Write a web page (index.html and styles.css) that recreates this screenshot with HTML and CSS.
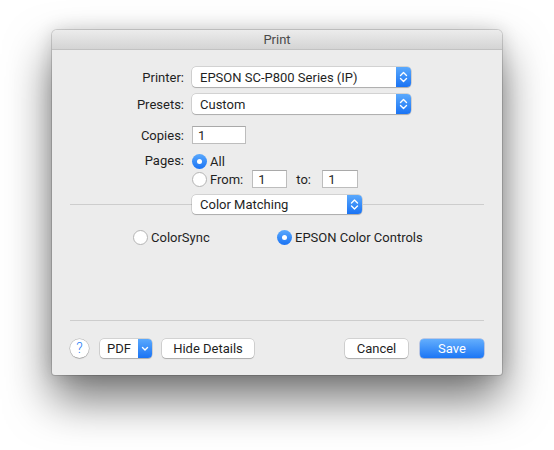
FILE: index.html
```html
<!DOCTYPE html>
<html lang="en">
<head>
    <meta charset="UTF-8">
    <meta name="viewport" content="width=device-width, initial-scale=1.0">
    <title>Print</title>
    <link rel="stylesheet" href="styles.css">
</head>
<body>
    <div class="window">
        <div class="titlebar">Print</div>

        <div class="form">
            <div class="row row-printer">
                <span class="label">Printer:</span>
                <div class="popup popup-wide">
                    <span class="popup-text">EPSON SC-P800 Series (IP)</span>
                    <span class="stepper">
                        <svg width="15" height="20" viewBox="0 0 15 20"><path d="M4.5 8.5 L7.5 5.5 L10.5 8.5 M4.5 11.5 L7.5 14.5 L10.5 11.5" fill="none" stroke="#fff" stroke-width="1.4" stroke-linecap="round" stroke-linejoin="round"/></svg>
                    </span>
                </div>
            </div>

            <div class="row row-presets">
                <span class="label">Presets:</span>
                <div class="popup popup-wide">
                    <span class="popup-text">Custom</span>
                    <span class="stepper">
                        <svg width="15" height="20" viewBox="0 0 15 20"><path d="M4.5 8.5 L7.5 5.5 L10.5 8.5 M4.5 11.5 L7.5 14.5 L10.5 11.5" fill="none" stroke="#fff" stroke-width="1.4" stroke-linecap="round" stroke-linejoin="round"/></svg>
                    </span>
                </div>
            </div>

            <div class="row row-copies">
                <span class="label">Copies:</span>
                <div class="field field-copies">1</div>
            </div>

            <div class="row row-pages">
                <span class="label label-pages">Pages:</span>
                <div class="pages">
                    <div class="radio-line">
                        <span class="radio checked"></span>
                        <span class="radio-text">All</span>
                    </div>
                    <div class="radio-line radio-from">
                        <span class="radio"></span>
                        <span class="radio-text">From:</span>
                        <div class="field field-from">1</div>
                        <span class="to-text">to:</span>
                        <div class="field field-to">1</div>
                    </div>
                </div>
            </div>
        </div>

        <div class="section">
            <span class="rule"></span>
            <div class="popup popup-section">
                <span class="popup-text">Color Matching</span>
                <span class="stepper">
                    <svg width="15" height="19" viewBox="0 0 15 19"><path d="M4.5 8 L7.5 5 L10.5 8 M4.5 11 L7.5 14 L10.5 11" fill="none" stroke="#fff" stroke-width="1.4" stroke-linecap="round" stroke-linejoin="round"/></svg>
                </span>
            </div>
            <span class="rule"></span>
        </div>

        <div class="matching">
            <div class="radio-line match-item">
                <span class="radio"></span>
                <span class="radio-text">ColorSync</span>
            </div>
            <div class="radio-line">
                <span class="radio checked"></span>
                <span class="radio-text">EPSON Color Controls</span>
            </div>
        </div>

        <div class="footer-rule"></div>

        <div class="footer">
            <span class="help">?</span>
            <div class="pdf">
                <span class="pdf-text">PDF</span>
                <span class="pdf-arrow">
                    <svg width="14" height="19" viewBox="0 0 14 19"><path d="M4.5 8.5 L7 11 L9.5 8.5" fill="none" stroke="#fff" stroke-width="1.4" stroke-linecap="round" stroke-linejoin="round"/></svg>
                </span>
            </div>
            <button class="btn btn-details">Hide Details</button>
            <span class="spacer"></span>
            <button class="btn btn-cancel">Cancel</button>
            <button class="btn btn-save">Save</button>
        </div>
    </div>
</body>
</html>
```

FILE: styles.css
```css
html {
    background-color: #ffffff;
}

body {
    margin: 0;
    min-height: 450px;
    padding-top: 30px;
    box-sizing: border-box;
    font-family: "Roboto", "Inter", sans-serif;
    font-size: 13px;
    color: #1f1f1f;
}

.window {
    width: 450px;
    margin-left: 52px;
    background-color: #ececec;
    border-radius: 5px 5px 3px 3px;
    box-shadow: 0 24px 46px rgba(0, 0, 0, 0.55), 0 0 18px rgba(0, 0, 0, 0.14), 0 0 0 1px rgba(0, 0, 0, 0.14);
    overflow: hidden;
}

.titlebar {
    height: 19px;
    line-height: 20px;
    text-align: center;
    color: #4a4a4a;
    background: linear-gradient(#ececec, #d4d4d4);
    border-bottom: 1px solid #c2c2c2;
}

.form {
    padding-top: 17px;
}

.row {
    display: flex;
    align-items: center;
}

.label {
    width: 132px;
    margin-right: 8px;
    text-align: right;
}

.row-printer {
    height: 20px;
    margin-bottom: 7px;
}

.row-presets {
    height: 20px;
    margin-bottom: 12px;
}

.row-copies {
    height: 18px;
    margin-bottom: 9px;
}

.row-pages {
    align-items: flex-start;
}

.label-pages {
    line-height: 16px;
}

.popup {
    display: flex;
    align-items: stretch;
    box-sizing: border-box;
    background-color: #ffffff;
    border-radius: 4px;
    box-shadow: 0 0 0 0.5px rgba(0, 0, 0, 0.22), 0 1px 1px rgba(0, 0, 0, 0.18);
}

.popup-wide {
    width: 219px;
    height: 20px;
}

.popup-text {
    flex: 1;
    padding-left: 8px;
    display: flex;
    align-items: center;
}

.stepper {
    width: 15px;
    display: flex;
    align-items: center;
    justify-content: center;
    background: linear-gradient(#5aa9fd, #1a73f4);
    border-radius: 0 4px 4px 0;
}

.field {
    box-sizing: border-box;
    height: 18px;
    line-height: 17px;
    padding-left: 5px;
    background-color: #ffffff;
    border: 1px solid #bdbdbd;
    border-top-color: #a9a9a9;
}

.field-copies {
    width: 54px;
}

.pages {
    display: flex;
    flex-direction: column;
}

.radio-line {
    display: flex;
    align-items: center;
    height: 16px;
}

.radio-from {
    height: 18px;
    margin-top: 1px;
}

.radio {
    box-sizing: border-box;
    width: 15px;
    height: 15px;
    border-radius: 50%;
    background-color: #ffffff;
    border: 1px solid #b4b4b4;
    margin-right: 3px;
    display: flex;
    align-items: center;
    justify-content: center;
}

.radio.checked {
    border: none;
    background: linear-gradient(#5aa9fd, #1a73f4);
}

.radio.checked::after {
    content: "";
    width: 5px;
    height: 5px;
    border-radius: 50%;
    background-color: #ffffff;
}

.field-from {
    width: 35px;
    margin-left: 9px;
}

.to-text {
    margin-left: 9px;
    width: 26px;
}

.field-to {
    width: 36px;
}

.section {
    display: flex;
    align-items: center;
    padding: 0 18px;
    margin-top: 7px;
}

.rule {
    flex: 1;
    height: 1px;
    background-color: #cdcdcd;
}

.popup-section {
    width: 170px;
    height: 19px;
}

.matching {
    display: flex;
    padding-left: 81px;
    margin-top: 15px;
}

.match-item {
    width: 144px;
}

.footer-rule {
    height: 1px;
    margin: 75px 18px 0;
    background-color: #cdcdcd;
}

.footer {
    display: flex;
    align-items: center;
    padding: 18px 18px 17px;
}

.help {
    box-sizing: border-box;
    width: 19px;
    height: 19px;
    border-radius: 50%;
    background-color: #ffffff;
    box-shadow: 0 0 0 0.5px rgba(0, 0, 0, 0.25), 0 1px 1px rgba(0, 0, 0, 0.15);
    color: #2a7ef5;
    font-size: 14px;
    font-weight: 300;
    line-height: 19px;
    text-align: center;
    margin-right: 11px;
}

.pdf {
    display: flex;
    width: 52px;
    height: 19px;
    border-radius: 4px;
    background-color: #ffffff;
    box-shadow: 0 0 0 0.5px rgba(0, 0, 0, 0.22), 0 1px 1px rgba(0, 0, 0, 0.18);
    overflow: hidden;
}

.pdf-text {
    flex: 1;
    text-align: center;
    line-height: 19px;
}

.pdf-arrow {
    width: 14px;
    display: flex;
    align-items: center;
    justify-content: center;
    background: linear-gradient(#5aa9fd, #1a73f4);
}

.btn {
    height: 19px;
    padding: 0;
    border: none;
    border-radius: 4px;
    background-color: #ffffff;
    box-shadow: 0 0 0 0.5px rgba(0, 0, 0, 0.22), 0 1px 1px rgba(0, 0, 0, 0.18);
    font-family: inherit;
    font-size: 13px;
    color: #1f1f1f;
}

.btn-details {
    width: 92px;
    margin-left: 10px;
}

.spacer {
    flex: 1;
}

.btn-cancel {
    width: 63px;
    margin-right: 12px;
}

.btn-save {
    width: 64px;
    color: #ffffff;
    background: linear-gradient(#63aefd, #1c76f5);
    box-shadow: 0 0 0 0.5px rgba(0, 60, 200, 0.4), 0 1px 1px rgba(0, 0, 0, 0.15);
}
```
